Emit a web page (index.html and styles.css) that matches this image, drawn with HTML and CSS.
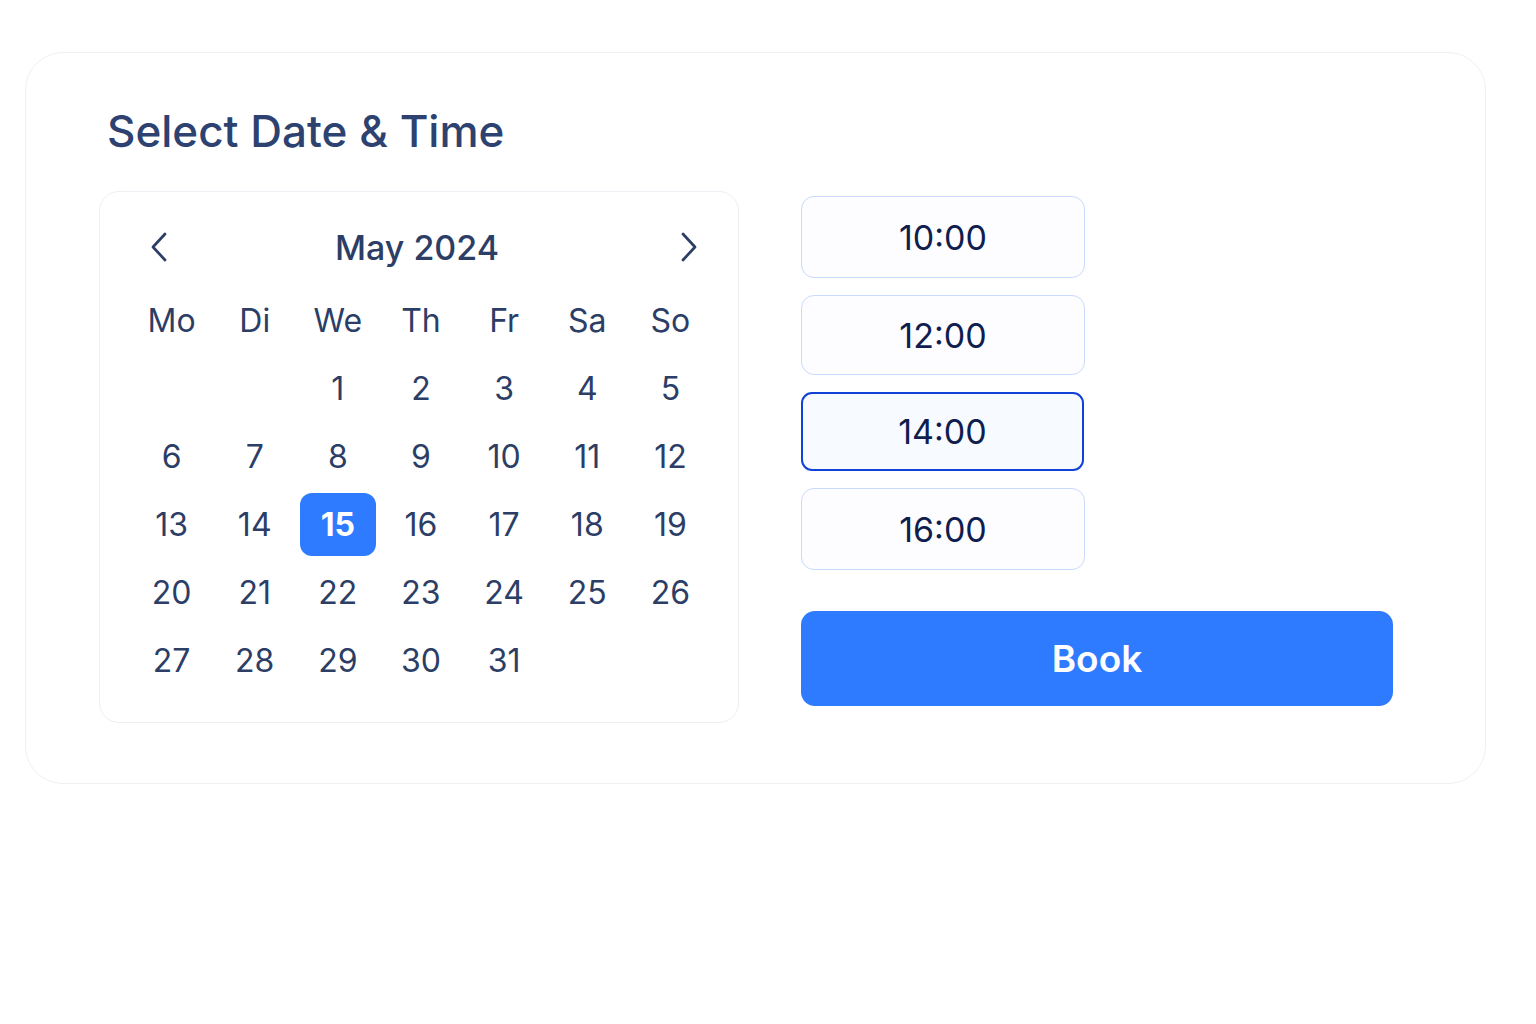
FILE: index.html
```html
<!DOCTYPE html>
<html lang="en">
  <head>
    <meta charset="UTF-8" />
    <meta name="viewport" content="width=device-width, initial-scale=1.0" />
    <title>Select Date &amp; Time</title>
    <link rel="stylesheet" href="styles.css">
  </head>
  <body>
    <div class="booking-card">
      <h2>Select Date &amp; Time</h2>
      <div class="booking-row">
        <div class="calendar">
          <div class="calendar-header">
            <button class="nav-btn" aria-label="Previous month">
              <svg width="18" height="30" viewBox="0 0 18 30">
                <path d="M15 2 L3 15 L15 28" fill="none" stroke="#2c3e66" stroke-width="2.7" stroke-linecap="round" stroke-linejoin="round" />
              </svg>
            </button>
            <span class="month">May 2024</span>
            <button class="nav-btn" aria-label="Next month">
              <svg width="18" height="30" viewBox="0 0 18 30">
                <path d="M3 2 L15 15 L3 28" fill="none" stroke="#2c3e66" stroke-width="2.7" stroke-linecap="round" stroke-linejoin="round" />
              </svg>
            </button>
          </div>
          <div class="calendar-grid">
            <span class="weekday">Mo</span>
            <span class="weekday">Di</span>
            <span class="weekday">We</span>
            <span class="weekday">Th</span>
            <span class="weekday">Fr</span>
            <span class="weekday">Sa</span>
            <span class="weekday">So</span>

            <span class="day"></span>
            <span class="day"></span>
            <span class="day">1</span>
            <span class="day">2</span>
            <span class="day">3</span>
            <span class="day">4</span>
            <span class="day">5</span>

            <span class="day">6</span>
            <span class="day">7</span>
            <span class="day">8</span>
            <span class="day">9</span>
            <span class="day">10</span>
            <span class="day">11</span>
            <span class="day">12</span>

            <span class="day">13</span>
            <span class="day">14</span>
            <span class="day selected"><span>15</span></span>
            <span class="day">16</span>
            <span class="day">17</span>
            <span class="day">18</span>
            <span class="day">19</span>

            <span class="day">20</span>
            <span class="day">21</span>
            <span class="day">22</span>
            <span class="day">23</span>
            <span class="day">24</span>
            <span class="day">25</span>
            <span class="day">26</span>

            <span class="day">27</span>
            <span class="day">28</span>
            <span class="day">29</span>
            <span class="day">30</span>
            <span class="day">31</span>
          </div>
        </div>

        <div class="times">
          <button class="slot">10:00</button>
          <button class="slot slot-short">12:00</button>
          <button class="slot active">14:00</button>
          <button class="slot">16:00</button>
          <button class="book-btn">Book</button>
        </div>
      </div>
    </div>
  </body>
</html>
```

FILE: styles.css
```css
body {
  margin: 0;
  padding: 52px 0 0 25px;
  background-color: #fff;
  font-family: Inter, "Noto Sans", Arial, sans-serif;
  color: #2c3e66;
}
.booking-card {
  box-sizing: border-box;
  width: 1461px;
  height: 732px;
  padding: 50px 0 0 73px;
  border: 1px solid #eef0f4;
  border-radius: 38px;
  background-color: #fff;
}
.booking-card h2 {
  margin: 0 0 32px 8px;
  font-size: 44px;
  line-height: 56px;
  font-weight: 500;
  letter-spacing: 0;
  color: #2d4270;
}
.booking-row {
  display: flex;
  align-items: flex-start;
  gap: 62px;
}

/* calendar */
.calendar {
  box-sizing: border-box;
  width: 640px;
  height: 532px;
  padding: 27px 26px 0 30px;
  border: 1px solid #eceff3;
  border-radius: 20px;
}
.calendar-header {
  display: flex;
  align-items: center;
  justify-content: space-between;
  height: 56px;
  padding: 0 8px 0 14px;
  margin-bottom: 11px;
}
.nav-btn {
  display: flex;
  align-items: center;
  justify-content: center;
  width: 30px;
  height: 40px;
  padding: 0;
  border: none;
  background: none;
  cursor: pointer;
}
.month {
  margin-right: 14px;
  font-size: 34px;
  font-weight: 500;
  color: #2c3e66;
}
.calendar-grid {
  display: grid;
  grid-template-columns: repeat(7, 1fr);
  grid-auto-rows: 68px;
}
.weekday,
.day {
  display: flex;
  align-items: center;
  justify-content: center;
  font-size: 32px;
  color: #2c3e66;
}
.day.selected span {
  display: flex;
  align-items: center;
  justify-content: center;
  width: 76px;
  height: 63px;
  border-radius: 12px;
  background-color: #2f7bff;
  color: #fff;
  font-weight: 700;
}

/* time slots */
.times {
  display: flex;
  flex-direction: column;
  width: 592px;
  padding-top: 5px;
}
.slot {
  box-sizing: border-box;
  width: 284px;
  height: 82px;
  margin-bottom: 17px;
  border: 1px solid #c9dafc;
  border-radius: 13px;
  background-color: #fdfdff;
  font-family: inherit;
  font-size: 34px;
  color: #0f1d4f;
  cursor: pointer;
}
.slot-short {
  height: 80px;
}
.slot.active {
  width: 283px;
  height: 79px;
  border: 2px solid #1241d8;
  border-radius: 11px;
  background-color: #f7faff;
}
.book-btn {
  width: 592px;
  height: 95px;
  margin-top: 24px;
  border: none;
  border-radius: 14px;
  background-color: #2f7bff;
  font-family: inherit;
  font-size: 37px;
  font-weight: 600;
  color: #fff;
  cursor: pointer;
}
```
